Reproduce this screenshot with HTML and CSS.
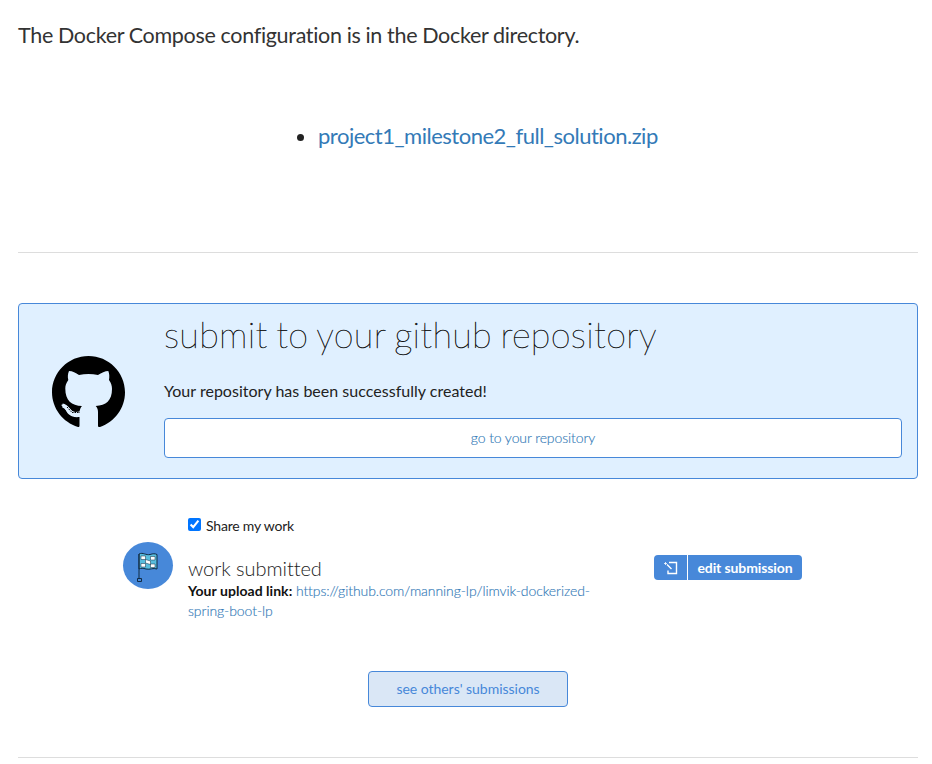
FILE: index.html
```html
<!DOCTYPE html>
<html lang="en">
<head>
<meta charset="utf-8">
<title>Project submission</title>
<link rel="stylesheet" href="styles.css">
</head>
<body>
<main class="page">
  <p class="intro">The Docker Compose configuration is in the Docker directory.</p>
  <ul class="files"><li><a href="#">project1_milestone2_full_solution.zip</a></li></ul>
  <hr class="rule">
  <section class="repo">
    <svg class="repo-logo" viewBox="0 0 73 72" aria-hidden="true">
      <path d="M36.500 0C16.300 0 0 16.300 0 36.300C0 52.500 11 66.400 26 71C27 71.100 27.500 70.600 27.500 69.500L27.500 61C19 62 15.500 58 13.500 53.500C12 51 9 50 9.500 48.800C12 47.500 15.800 49.800 18.500 53.500C21 56.500 24 56 27.500 55.500C28 53 28.800 51.200 30 50C19.500 49.800 13.300 44.500 13.300 32.500C13.300 29.500 14.200 27 16.300 24C15.600 21 15.700 18 17 15C20.500 15 23.800 16.800 27 19C33 17.600 40 17.600 46 19C49.500 16.800 53 15 56.300 15C57.500 18 57.500 21 57 24C59.200 27 60 30 60 33C60 44.500 54 49.500 43.700 50C45.300 51.500 46 53.700 46 56V69.500C46 70.700 46.700 71.300 48 71C62.500 66 73 52.300 73 36.300C73 16.300 56.700 0 36.500 0Z"/>
      <path class="repo-logo-gap" d="M10.500 49.500C16 50 16.500 57.500 22 58H28"/>
      <path class="repo-logo-tail" d="M15 51L20 56.500H28"/>
    </svg>
    <div class="repo-body">
      <h2 class="repo-title">submit to your github repository</h2>
      <p class="repo-text">Your repository has been successfully created!</p>
      <a class="repo-button" href="#">go to your repository</a>
    </div>
  </section>
  <section class="work">
    <div class="badge">
      <svg viewBox="0 0 24 32" aria-hidden="true">
        <path class="flag" d="M3 3C7 1 10 4.500 14 3.500C17 2.500 19 2.500 21 3.500V18C17 16.500 14 19 10 18C7 17 5 17 3 18Z"/>
        <path class="squares" d="M5 5H9.500V8.500H5ZM14.500 5.500H19V9H14.500ZM9.500 8.500L14.500 10V13.500L9.500 12ZM5 12.500H9.500V16H5ZM14.500 13H19V16.500H14.500Z"/>
        <path class="pole" d="M3 3V27M1.500 27.500H5.500V30.500H1.500Z"/>
      </svg>
    </div>
    <div class="details">
      <label class="share"><input type="checkbox" checked><span>Share my work</span></label>
      <h3 class="work-title">work submitted</h3>
      <p class="upload"><b>Your upload link:</b> <a href="#">https://github.com/manning-lp/limvik-dockerized-spring-boot-lp</a></p>
    </div>
    <button class="edit">
      <span class="edit-icon"><svg viewBox="0 0 14 14" aria-hidden="true"><path d="M5 1.500H12.500V12.500H4V9.500M3 3.500L7.500 8"/><path class="spark" d="M0 2.500H3M1.500 1V4"/></svg></span>
      <span class="edit-label">edit submission</span>
    </button>
  </section>
  <button class="others">see others' submissions</button>
  <hr class="rule">
</main>
</body>
</html>
```
FILE: styles.css
```css
* { box-sizing: border-box; }
body { margin: 0; background: #fff; color: #222; font-family: Lato, "Liberation Sans", sans-serif; font-variant-ligatures: none; overflow: hidden; }
.page { width: 900px; margin-left: 18px; padding-top: 19px; }
p, h2, h3 { margin: 0; }
a { color: #337ab7; text-decoration: none; }
button { font-family: inherit; padding: 0; }
.intro { font-size: 21.500px; line-height: 32px; letter-spacing: -.31px; word-spacing: -.2px; color: #333; }
.files { width: 340px; margin: 69px 0 0 300px; padding: 0; font-size: 22px; line-height: 32px; letter-spacing: -.49px; white-space: nowrap; }
.rule { height: 1px; margin: 0; border: 0; background: #ddd; }
.files + .rule { margin-top: 100px; }
.repo { display: flex; height: 176px; margin-top: 50px; border: 1px solid #4788d9; border-radius: 4px; background: #e0f0ff; }
.repo-logo { width: 73px; height: 72px; margin: 51.500px 0 0 33.300px; flex: none; }
.repo-logo-gap { fill: none; stroke: #e0f0ff; stroke-width: 4; }
.repo-logo-tail { fill: none; stroke: #000; stroke-width: 1; stroke-dasharray: 1.500 1; }
.repo-body { width: 738px; margin-left: 38.700px; }
.repo-title { height: 64px; font-size: 36px; line-height: 60px; letter-spacing: .3px; word-spacing: -2px; font-weight: 200; color: #111; -webkit-text-stroke: .4px #111; white-space: nowrap; }
.repo-text { height: 50px; line-height: 46px; font-size: 16px; letter-spacing: .02px; }
.repo-button { display: block; height: 40px; border: 1px solid #4788d9; border-radius: 4px; background: #fff; font-size: 14px; line-height: 38px; font-weight: 300; letter-spacing: -.1px; -webkit-text-stroke: .15px #337ab7; text-align: center; }
.work { display: flex; height: 147px; margin: 37px 0 0 105px; }
.badge { display: flex; justify-content: center; width: 50px; height: 47px; margin-top: 26px; padding-top: 9px; border-radius: 50%; background: #4788d9; }
.badge svg { width: 24px; height: 32px; }
.flag { fill: #58bddd; stroke: #102a43; stroke-width: 1; }
.squares { fill: #fff; stroke: #102a43; stroke-width: .5; }
.pole { fill: none; stroke: #102a43; stroke-width: 1; }
.details { width: 420px; margin-left: 15px; }
.share { display: flex; height: 20px; font-size: 14px; line-height: 20px; letter-spacing: -.2px; }
.share input { width: 13px; height: 13px; margin: 2px 5px 0 0; }
.work-title { margin-top: 20px; height: 25px; font-size: 20px; line-height: 24px; font-weight: 300; letter-spacing: -.05px; }
.upload { font-size: 14px; line-height: 20px; color: #111; }
.upload b { letter-spacing: .04px; }
.upload a { font-weight: 300; letter-spacing: -.08px; -webkit-text-stroke: .15px #337ab7; }
.edit { display: flex; width: 148px; height: 25px; margin: 39px 0 0 46px; border: 0; border-radius: 4px; background: #4788d9; color: #fff; }
.edit-icon { display: flex; align-items: center; justify-content: center; width: 34px; height: 25px; border-right: 1px solid #fff; }
.edit-icon svg { width: 14px; height: 14px; fill: none; stroke: #fff; stroke-width: 1.400; }
.edit-icon .spark { stroke-width: .8; }
.edit-label { flex: 1; font-size: 14px; line-height: 25px; font-weight: 700; letter-spacing: -.1px; }
.others { display: block; width: 200px; height: 36px; margin: 8px auto 50px; padding-bottom: 2px; border: 1px solid #4788d9; border-radius: 4px; background: #dae7f6; color: #4788d9; font-size: 14px; letter-spacing: -.03px; }
```
